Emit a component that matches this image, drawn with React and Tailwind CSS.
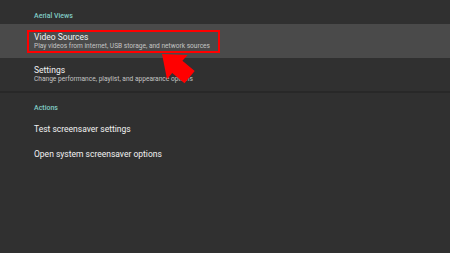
export default function App() {
  return (
    <div
      className="relative w-[450px] h-[253px] overflow-hidden bg-[#303030] text-white"
      style={{ fontFamily: "Roboto, 'Noto Sans', sans-serif" }}
    >
      <div className="h-[24px] px-[34px] pt-[11px] text-[7px] leading-[10px] font-medium text-[#80cbc4]">
        Aerial Views
      </div>

      <div className="relative h-[34px] bg-[#4a4a4a] px-[34px] flex flex-col justify-center">
        <p className="text-[8.5px] leading-[10px] text-[#f2f2f2]">Video Sources</p>
        <p className="text-[6.6px] leading-[9px] text-[#c4c4c4]">
          Play videos from internet, USB storage, and network sources
        </p>
        <div className="absolute left-[27px] top-[6px] w-[193px] h-[23px] border-2 border-[#ff0000]" />
      </div>

      <div className="h-[33px] px-[34px] flex flex-col justify-center">
        <p className="text-[8.5px] leading-[10px] text-[#f2f2f2]">Settings</p>
        <p className="text-[6.6px] leading-[9px] text-[#c4c4c4]">
          Change performance, playlist, and appearance options
        </p>
      </div>

      <div className="h-[2px] bg-[#282828]" />

      <div className="h-[23px] px-[34px] pt-[10px] text-[7px] leading-[10px] font-medium text-[#80cbc4]">
        Actions
      </div>

      <div className="h-[26px] px-[34px] flex items-center text-[8.5px] text-[#f2f2f2]">
        Test screensaver settings
      </div>
      <div className="h-[25px] px-[34px] flex items-center text-[8.5px] text-[#f2f2f2]">
        Open system screensaver options
      </div>

      <svg className="absolute left-0 top-0" width="450" height="253" viewBox="0 0 450 253">
        <polygon
          points="162,54 187.6,55 182.4,60.8 194.7,71 184.5,83.2 172.2,73 167,79.2"
          fill="#ff0000"
        />
      </svg>
    </div>
  );
}
